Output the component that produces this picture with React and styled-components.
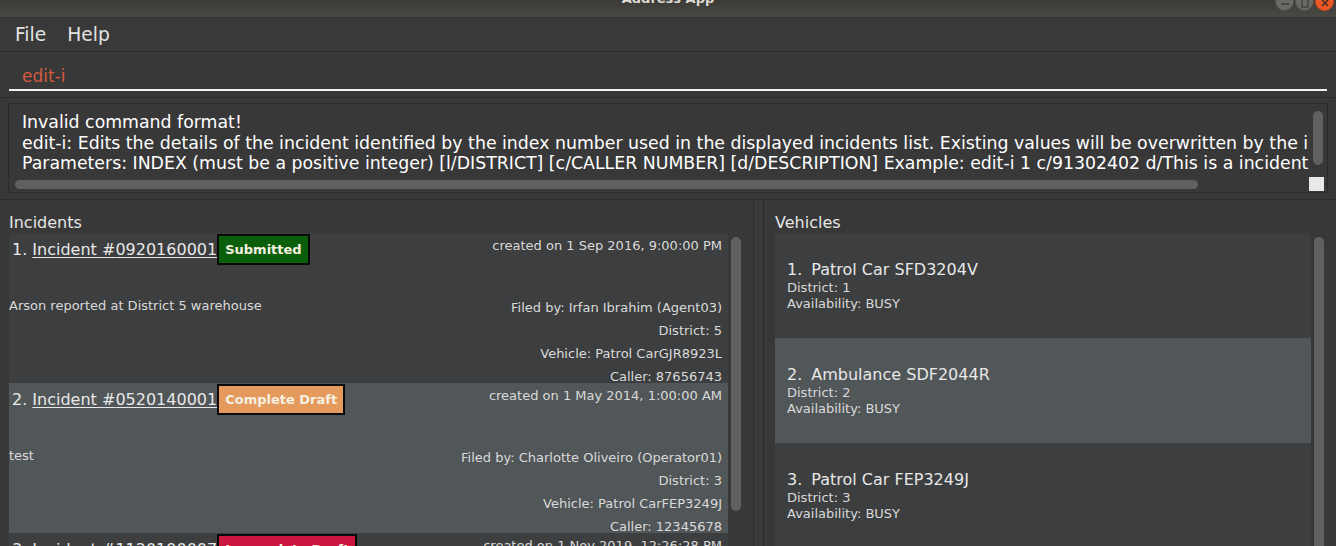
import React from "react";
import styled, { createGlobalStyle } from "styled-components";

const GlobalStyle = createGlobalStyle`
    body {
        margin: 0;
        background: #383838;
        font-family: "DejaVu Sans", "Liberation Sans", sans-serif;
        overflow: hidden;
    }
`;

const incidents = [
    {
        id: "0920160001",
        status: "Submitted",
        created: "1 Sep 2016, 9:00:00 PM",
        desc: "Arson reported at District 5 warehouse",
        filedBy: "Irfan Ibrahim (Agent03)",
        district: 5,
        vehicle: "Patrol CarGJR8923L",
        caller: "87656743",
    },
    {
        id: "0520140001",
        status: "Complete Draft",
        created: "1 May 2014, 1:00:00 AM",
        desc: "test",
        filedBy: "Charlotte Oliveiro (Operator01)",
        district: 3,
        vehicle: "Patrol CarFEP3249J",
        caller: "12345678",
    },
    {
        id: "1120190007",
        status: "Incomplete Draft",
        created: "1 Nov 2019, 12:26:28 PM",
        desc: "",
        filedBy: "",
        district: 1,
        vehicle: "",
        caller: "",
    },
];

const vehicles = [
    { name: "Patrol Car SFD3204V", district: 1, availability: "BUSY" },
    { name: "Ambulance SDF2044R", district: 2, availability: "BUSY" },
    { name: "Patrol Car FEP3249J", district: 3, availability: "BUSY" },
];

const badgeColors = {
    Submitted: "#0b5f0b",
    "Complete Draft": "#e49a5c",
    "Incomplete Draft": "#cb173f",
};

export default function App() {
    return (
        <>
            <GlobalStyle />
            <Window>
                <TitleBar>
                    <span />
                    <WindowTitle>Address App</WindowTitle>
                    <WindowButtons>
                        <WinButton>
                            <svg width="10" height="10" viewBox="0 0 10 10">
                                <path d="M1 6h8" stroke="#3a3a36" strokeWidth="1.4" />
                            </svg>
                        </WinButton>
                        <WinButton>
                            <svg width="10" height="10" viewBox="0 0 10 10">
                                <rect x="2" y="1" width="6" height="8" fill="none" stroke="#3a3a36" strokeWidth="1.2" />
                            </svg>
                        </WinButton>
                        <WinButton close>
                            <svg width="10" height="10" viewBox="0 0 10 10">
                                <path d="M2 2l6 6M8 2l-6 6" stroke="#3a2a20" strokeWidth="1.4" />
                            </svg>
                        </WinButton>
                    </WindowButtons>
                </TitleBar>

                <MenuBar>
                    <MenuItem>File</MenuItem>
                    <MenuItem>Help</MenuItem>
                </MenuBar>

                <CommandBox>
                    <CommandField>edit-i</CommandField>
                </CommandBox>

                <ResultPane>
                    <ResultArea>
                        <ResultText>
                            <div>Invalid command format!</div>
                            <div>
                                edit-i: Edits the details of the incident identified by the index number used in the displayed incidents list. Existing values will be overwritten by the input values.
                            </div>
                            <div>
                                Parameters: INDEX (must be a positive integer) [l/DISTRICT] [c/CALLER NUMBER] [d/DESCRIPTION] Example: edit-i 1 c/91302402 d/This is a incident description
                            </div>
                        </ResultText>
                        <VTrack>
                            <Thumb style={{ height: 54, marginTop: 7 }} />
                        </VTrack>
                        <HTrack>
                            <Thumb style={{ width: 1183, height: 9, marginLeft: 6 }} />
                        </HTrack>
                        <Corner>
                            <CornerBox />
                        </Corner>
                    </ResultArea>
                </ResultPane>

                <SplitPane>
                    <Panel>
                        <PanelLabel>Incidents</PanelLabel>
                        <ListWrap>
                            <List>
                                {incidents.map((inc, i) => (
                                    <IncidentCard key={inc.id} odd={i % 2 === 1}>
                                        <CardTop>
                                            <TitleRow>
                                                <span>{i + 1}. </span>
                                                <IncidentLink>Incident #{inc.id}</IncidentLink>
                                                <Badge bg={badgeColors[inc.status]}>{inc.status}</Badge>
                                            </TitleRow>
                                            <Created>created on {inc.created}</Created>
                                        </CardTop>
                                        <CardBottom>
                                            <Desc>{inc.desc}</Desc>
                                            <Details>
                                                <div>Filed by: {inc.filedBy}</div>
                                                <div>District: {inc.district}</div>
                                                <div>Vehicle: {inc.vehicle}</div>
                                                <div>Caller: {inc.caller}</div>
                                            </Details>
                                        </CardBottom>
                                    </IncidentCard>
                                ))}
                            </List>
                            <ScrollCol>
                                <Thumb style={{ height: 274, marginTop: 4 }} />
                            </ScrollCol>
                        </ListWrap>
                    </Panel>
                    <Divider />
                    <Panel right>
                        <PanelLabel>Vehicles</PanelLabel>
                        <ListWrap>
                            <List>
                                {vehicles.map((v, i) => (
                                    <VehicleCard key={v.name} odd={i % 2 === 1}>
                                        <VehicleTitle>
                                            <span>{i + 1}.</span>
                                            <span>{v.name}</span>
                                        </VehicleTitle>
                                        <SmallLine>District: {v.district}</SmallLine>
                                        <SmallLine>Availability: {v.availability}</SmallLine>
                                    </VehicleCard>
                                ))}
                            </List>
                            <ScrollCol>
                                <Thumb style={{ height: 320, marginTop: 4 }} />
                            </ScrollCol>
                        </ListWrap>
                    </Panel>
                </SplitPane>
            </Window>
        </>
    );
}

const Window = styled.div`
    width: 1336px;
    height: 546px;
    display: flex;
    flex-direction: column;
    overflow: hidden;
    background: #383838;
`;

const TitleBar = styled.div`
    height: 17px;
    flex-shrink: 0;
    display: grid;
    grid-template-columns: 1fr auto 1fr;
    background: linear-gradient(#3b3a36, #4b4944);
    border-bottom: 1px solid #2f2e2b;
    overflow: hidden;
`;

const WindowTitle = styled.div`
    font-size: 13px;
    font-weight: bold;
    color: #dfdbd2;
    line-height: 14px;
    margin-top: -8px;
`;

const WindowButtons = styled.div`
    display: flex;
    justify-content: flex-end;
    gap: 1px;
    padding-right: 2px;
    margin-top: -8px;
`;

const WinButton = styled.div`
    width: 19px;
    height: 19px;
    border-radius: 50%;
    display: flex;
    align-items: center;
    justify-content: center;
    padding-top: 2px;
    box-sizing: border-box;
    background: ${(p) => (p.close ? "#eb5a26" : "#6a6964")};
    border: 1px solid ${(p) => (p.close ? "#c94a1e" : "#55544f")};
`;

const MenuBar = styled.div`
    height: 33px;
    flex-shrink: 0;
    display: flex;
    align-items: center;
    gap: 21px;
    padding-left: 15px;
    border-bottom: 1px solid #2c2c2c;
    background: #393939;
`;

const MenuItem = styled.span`
    font-size: 18.67px;
    color: #e2e2e2;
    line-height: 20px;
`;

const CommandBox = styled.div`
    height: 45px;
    flex-shrink: 0;
    padding: 0 9px;
    box-sizing: border-box;
`;

const CommandField = styled.div`
    height: 39px;
    box-sizing: border-box;
    border-bottom: 2px solid #f2f2f2;
    display: flex;
    align-items: flex-end;
    padding: 0 0 3px 13px;
    font-size: 17px;
    line-height: 20px;
    color: #d45a3f;
`;

const ResultPane = styled.div`
    height: 103px;
    flex-shrink: 0;
    box-sizing: border-box;
    padding: 5px 8px 0;
    border-top: 1px solid #2c2c2c;
    border-bottom: 1px solid #2c2c2c;
`;

const ResultArea = styled.div`
    height: 90px;
    box-sizing: border-box;
    border: 1px solid #2a2a2a;
    display: grid;
    grid-template-columns: 1fr 18px;
    grid-template-rows: 1fr 16px;
`;

const ResultText = styled.div`
    overflow: hidden;
    white-space: nowrap;
    padding: 8px 0 0 13px;
    font-size: 17.33px;
    line-height: 20.5px;
    color: #ffffff;
`;

const VTrack = styled.div`
    display: flex;
    justify-content: center;
`;

const HTrack = styled.div`
    display: flex;
    align-items: center;
`;

const Corner = styled.div`
    display: flex;
    align-items: center;
    justify-content: center;
    padding-right: 3px;
`;

const CornerBox = styled.div`
    width: 15px;
    height: 14px;
    background: #e8e8e8;
`;

const Thumb = styled.div`
    width: 10px;
    background: #606060;
    border-radius: 5px;
    flex-shrink: 0;
`;

const SplitPane = styled.div`
    flex: 1;
    display: flex;
    min-height: 0;
`;

const Panel = styled.div`
    width: ${(p) => (p.right ? "auto" : "754px")};
    flex: ${(p) => (p.right ? "1" : "none")};
    box-sizing: border-box;
    display: flex;
    flex-direction: column;
    padding: 12px 8px 0 ${(p) => (p.right ? "11px" : "9px")};
    border-left: ${(p) => (p.right ? "1px solid #2b2b2b" : "none")};
    border-right: ${(p) => (p.right ? "none" : "1px solid #2b2b2b")};
    min-height: 0;
`;

const Divider = styled.div`
    width: 9px;
    flex-shrink: 0;
    background: #393939;
`;

const PanelLabel = styled.div`
    font-size: 16px;
    line-height: 21px;
    color: #e6e6e6;
`;

const ListWrap = styled.div`
    flex: 1;
    display: flex;
    min-height: 0;
`;

const List = styled.div`
    flex: 1;
    display: flex;
    flex-direction: column;
    overflow: hidden;
`;

const ScrollCol = styled.div`
    width: 17px;
    flex-shrink: 0;
    padding-left: 3px;
    box-sizing: border-box;
`;

const IncidentCard = styled.div`
    height: 150px;
    flex-shrink: 0;
    box-sizing: border-box;
    padding-right: 6px;
    background: ${(p) => (p.odd ? "#515658" : "#3c3e3f")};
    color: #dadada;
`;

const CardTop = styled.div`
    display: flex;
    justify-content: space-between;
    align-items: flex-start;
    height: 32px;
`;

const TitleRow = styled.div`
    display: flex;
    align-items: center;
    height: 32px;
    padding-left: 3px;
    font-size: 16px;
    color: #e8e8e8;
    white-space: pre;
`;

const IncidentLink = styled.span`
    text-decoration: underline;
    text-underline-offset: 2px;
`;

const Badge = styled.span`
    display: inline-flex;
    align-items: center;
    height: 31px;
    box-sizing: border-box;
    padding: 0 6px;
    border: 2px solid #0a0a0a;
    background: ${(p) => p.bg};
    color: #f5f0e0;
    font-size: 13px;
    font-weight: bold;
`;

const Created = styled.div`
    font-size: 13px;
    line-height: 18px;
    padding-top: 4px;
`;

const CardBottom = styled.div`
    display: flex;
    justify-content: space-between;
    align-items: flex-start;
    margin-top: 31px;
    font-size: 13px;
`;

const Desc = styled.div`
    line-height: 20px;
`;

const Details = styled.div`
    text-align: right;
    line-height: 23px;
`;

const VehicleCard = styled.div`
    height: 105px;
    flex-shrink: 0;
    box-sizing: border-box;
    display: flex;
    flex-direction: column;
    justify-content: center;
    padding-left: 12px;
    background: ${(p) => (p.odd ? "#515658" : "#3c3e3f")};
    color: #dadada;
`;

const VehicleTitle = styled.div`
    display: flex;
    gap: 9px;
    font-size: 16px;
    line-height: 20px;
    color: #e8e8e8;
`;

const SmallLine = styled.div`
    font-size: 13px;
    line-height: 16px;
`;
